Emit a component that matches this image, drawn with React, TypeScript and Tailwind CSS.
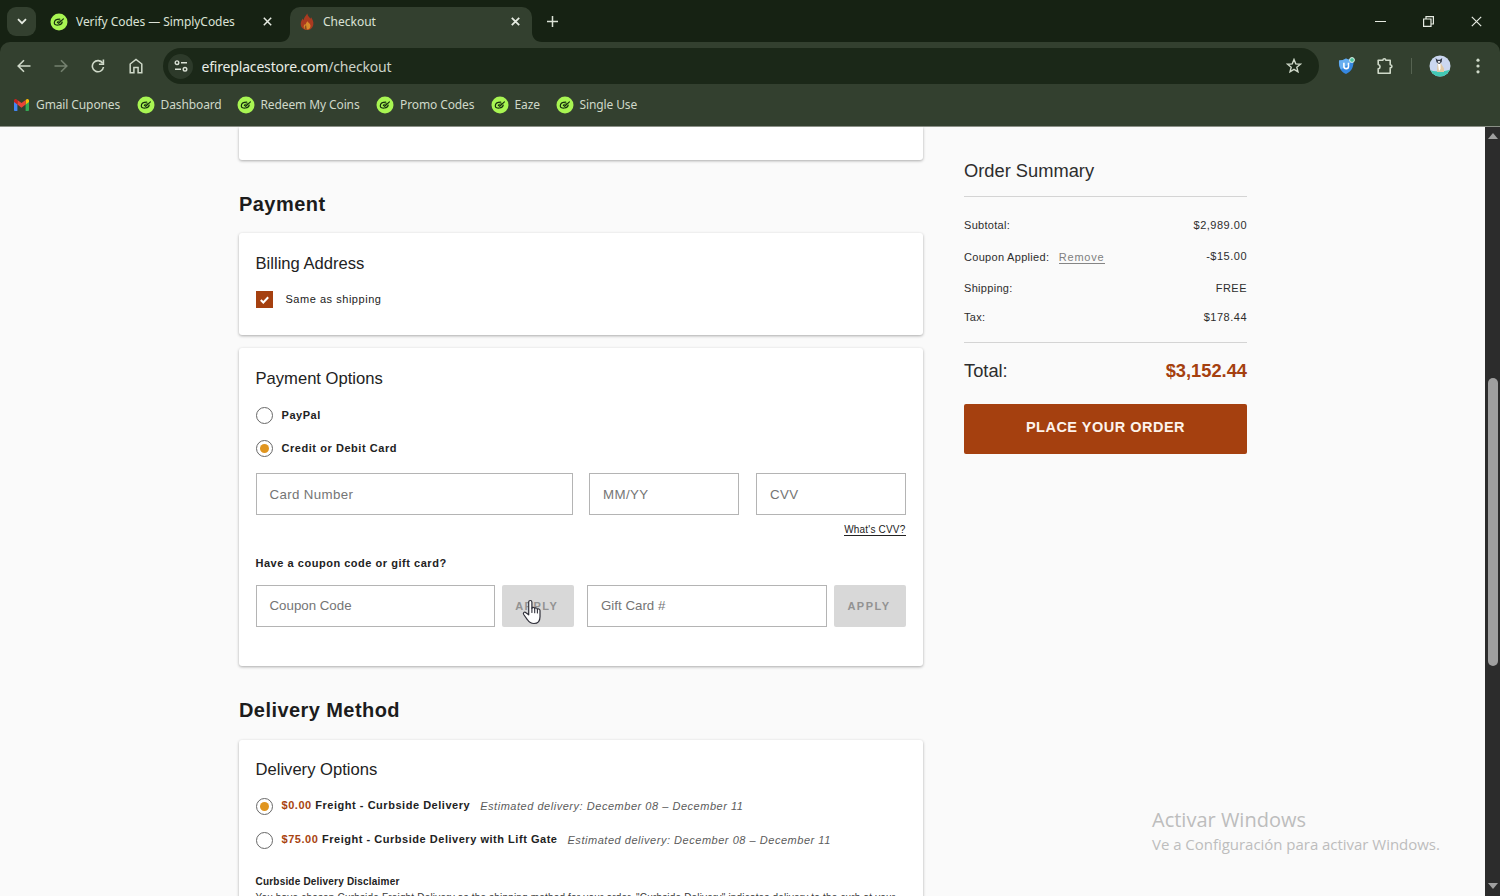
import type { ReactNode } from "react"
import clsx from "clsx"

const BOOKMARKS = [
    { label: "Dashboard", className: "w-[100px]" },
    { label: "Redeem My Coins", className: "w-[139.500px]" },
    { label: "Promo Codes", className: "w-[114.500px]" },
    { label: "Eaze", className: "w-[65px]" },
    { label: "Single Use", className: "w-[90px]" },
]

function CodesIcon() {
    return (
        <svg width="18" height="18" viewBox="0 0 18 18" className="shrink-0">
            <circle cx="9" cy="9" r="8.500" fill="#a8f552" />
            <g fill="none" stroke="#17300f" strokeWidth="1.200" strokeLinecap="round" strokeLinejoin="round">
                <path d="M9.800 6.200C6.600 6.200 4.300 7.800 4.300 9.900c0 1.900 2.100 2.500 4.200 2.100 2.200-.4 3.500-1.400 3.700-2.900" />
                <path d="M7.300 9.300l1.400 1 4.700-4.400" />
                <path d="M7.800 8.500l2.600-.8" strokeWidth="0.900" />
            </g>
        </svg>
    )
}

function FlameIcon() {
    return (
        <svg width="16" height="18" viewBox="0 0 16 18" className="shrink-0">
            <path d="M8.300.6c.4 2.600 2.100 3.500 3.100 5.200l.7-1.500c1.500 2.200 2.700 4.500 2.200 7.400-.5 3-2.800 5.400-6.200 5.400-3.700 0-6.300-2.400-6.400-6 0-2.400 1-3.900 2-5.600l.9 1.700C5 4.700 6.600 3 8.300.6z" fill="#a93a20" />
            <path d="M8.600 8.300c.2 1.300 2.600 2 2.900 4.300.2 2.300-1 4-3.300 4s-3.600-1.300-3.500-3.100c.1-1.200.8-1.900 1.400-2.500l.7.800c.1-1.400.8-2.500 1.800-3.500z" fill="#d88a2a" />
            <path d="M7 11.700l-1.300 2.200.5 2.600 1.700.3z" fill="#8a4a1f" />
        </svg>
    )
}

function GmailIcon() {
    return (
        <svg width="15" height="12" viewBox="0 0 15 12" className="shrink-0">
            <path d="M0 1.500V11c0 .5.4 1 1 1h2.400V4.500z" fill="#4285f4" />
            <path d="M11.600 4.500V12H14c.6 0 1-.5 1-1V1.500z" fill="#34a853" />
            <path d="M11.600 1v4.600L15 3V1.600C15 .2 13.400-.5 12.400.4z" fill="#fbbc04" />
            <path d="M3.400 5.600V1l4.100 3.100L11.600 1v4.600L7.500 8.700z" fill="#ea4335" />
            <path d="M0 1.600V3l3.400 2.600V1L2.600.4C1.600-.5 0 .2 0 1.600z" fill="#c5221f" />
        </svg>
    )
}

function CloseIcon({ size, width = 1.5 }: { size: number, width?: number }) {
    return (
        <svg width={size} height={size} viewBox={`0 0 ${size} ${size}`} className="shrink-0">
            <path d={`M.8.8L${size - 0.8} ${size - 0.8}M${size - 0.8}.8L.8 ${size - 0.8}`} stroke="#e6ebe2" strokeWidth={width} />
        </svg>
    )
}

function TabStrip() {
    return (
        <div className="flex h-[42px] bg-[#162213] text-xs text-[#dbe2d6]">
            <button className="mt-[7px] ml-[7px] flex size-[29px] items-center justify-center rounded-[9px] bg-[#33402f]">
                <svg width="10" height="7" viewBox="0 0 10 7">
                    <path d="M1 1.200l4 4 4-4" fill="none" stroke="#e6ebe2" strokeWidth="1.800" />
                </svg>
            </button>
            <div className="ml-[14px] flex h-[43px] w-[240px] items-center">
                <CodesIcon />
                <span className="ml-2 w-[178px] whitespace-nowrap tracking-[-0.06px]">Verify Codes — SimplyCodes</span>
                <span className="ml-[9px]"><CloseIcon size={9} /></span>
            </div>
            <div className="relative mt-[7px] flex h-[35px] w-[242px] items-center rounded-t-[10px] bg-[#33402f]">
                <svg width="10" height="10" viewBox="0 0 10 10" className="absolute bottom-0 -left-[10px]">
                    <path d="M10 0v10H0C6 10 10 6 10 0z" fill="#33402f" />
                </svg>
                <svg width="10" height="10" viewBox="0 0 10 10" className="absolute -right-[10px] bottom-0">
                    <path d="M0 0v10h10C4 10 0 6 0 0z" fill="#33402f" />
                </svg>
                <span className="mb-[5px] ml-[9px]"><FlameIcon /></span>
                <span className="mb-[5px] ml-2 w-[188px]">Checkout</span>
                <span className="mb-[6px]"><CloseIcon size={9} width={1.800} /></span>
            </div>
            <svg width="11" height="11" viewBox="0 0 11 11" className="mt-4 ml-[15px]">
                <path d="M5.500 0v11M0 5.500h11" stroke="#dbe2d6" strokeWidth="1.500" />
            </svg>
            <div className="mt-[15px] mr-[18px] ml-auto flex h-[13px] items-center">
                <svg width="11" height="11" viewBox="0 0 11 11">
                    <path d="M0 5.500h11" stroke="#e6ebe2" />
                </svg>
                <svg width="11" height="11" viewBox="0 0 11 11" className="ml-[37px]">
                    <path d="M.6 3h7.400v7.400H.6zM3 2.800V.6h7.400V8H8.200" fill="none" stroke="#e6ebe2" strokeWidth="1.200" />
                </svg>
                <span className="ml-[37px]"><CloseIcon size={11} width={1.200} /></span>
            </div>
        </div>
    )
}

function Toolbar() {
    return (
        <div className="flex h-12 items-center rounded-t-[10px] bg-[#33402f]">
            <svg width="14" height="14" viewBox="0 0 14 14" className="ml-[17px]">
                <path d="M13.500 7H1.300M7 1.200L1.200 7 7 12.800" fill="none" stroke="#cfd9c9" strokeWidth="1.600" />
            </svg>
            <svg width="14" height="14" viewBox="0 0 14 14" className="ml-[23px]">
                <path d="M.5 7h12.200M7 1.200L12.800 7 7 12.800" fill="none" stroke="#74806f" strokeWidth="1.600" />
            </svg>
            <svg width="14" height="14" viewBox="0 0 14 14" className="ml-[23px]">
                <path d="M11.700 4.200A5.600 5.600 0 1 0 12.500 8" fill="none" stroke="#cfd9c9" strokeWidth="1.600" />
                <path d="M12.400.6v4.600H7.900" fill="none" stroke="#cfd9c9" strokeWidth="1.600" />
            </svg>
            <svg width="14" height="16" viewBox="0 0 14 16" className="ml-6">
                <path d="M1.200 6L7 1.500 12.800 6v8.700H9.100V9.500H4.900v5.200H1.200z" fill="none" stroke="#cfd9c9" strokeWidth="1.500" />
            </svg>
            <div className="ml-5 flex h-9 w-[1156px] items-center rounded-full bg-[#1b2818]">
                <div className="ml-[5px] flex size-[25px] items-center justify-center rounded-full bg-[#2d3a2a]">
                    <svg width="14" height="12" viewBox="0 0 14 12" fill="none" stroke="#dbe2d6" strokeWidth="1.400">
                        <circle cx="3" cy="2.700" r="1.800" />
                        <path d="M7 2.700h6M1 9.300h6" />
                        <circle cx="11" cy="9.300" r="1.800" />
                    </svg>
                </div>
                <span className="ml-[8.500px] text-[14px] tracking-[-0.180px] text-[#e9eee6]">
                    efireplacestore.com<span className="text-[#cbd2c7]">/checkout</span>
                </span>
                <svg width="16" height="16" viewBox="0 0 16 16" className="mr-[17px] ml-auto">
                    <path d="M8 1.500l1.750 4.350 4.650.35-3.600 3 1.150 4.600L8 11.300l-3.950 2.500L5.200 9.200l-3.600-3 4.650-.35z" fill="none" stroke="#cfd9c9" strokeWidth="1.400" />
                </svg>
            </div>
            <svg width="18" height="18" viewBox="0 0 18 18" className="ml-[19px]">
                <path d="M8 1.500C10 2.600 12.500 3 15.500 3c.4 6-1.300 11.300-7.500 14C2.200 14.700.5 9.500 1 3.500 4 3.500 6 2.600 8 1.500z" fill="#3587e0" />
                <path d="M8 1.500C6 2.600 4 3.500 1 3.500.8 7 1.500 10 3 12.500L15.400 4V3C12.500 3 10 2.600 8 1.500z" fill="#67aef0" />
                <path d="M5.900 5.800v3.600c0 2.900 4.600 2.900 4.600 0V5.800" fill="none" stroke="#fff" strokeWidth="1.600" />
                <circle cx="14" cy="3" r="2.400" fill="#4cc29b" stroke="#e3f5ee" />
            </svg>
            <svg width="18" height="18" viewBox="0 0 18 18" className="ml-5">
                <path d="M2.200 3.200h4.700c.1-2 2.800-2 2.900 0h4.400v4.600c2.300.2 2.300 2.900 0 3.100v5.300h-12v-4.300c2.500-.5 2.500-3.900 0-4.400z" fill="none" stroke="#cfd9c9" strokeWidth="1.600" strokeLinejoin="round" />
            </svg>
            <div className="ml-[17px] h-4 w-px bg-[#566351]" />
            <svg width="22" height="22" viewBox="0 0 22 22" className="ml-[17px]">
                <defs>
                    <clipPath id="avatar"><circle cx="11" cy="11" r="10.500" /></clipPath>
                </defs>
                <g clipPath="url(#avatar)">
                    <path d="M0 0h22v22H0z" fill="#cbd7f0" />
                    <path d="M0 14.500c4 2.500 14 2.500 22 0V22H0z" fill="#42c9b5" />
                    <path d="M8.500 8.500h3.500l3 5v3.500H8z" fill="#e0c9a5" />
                    <path d="M9 9h2.500v5l-1.500 2z" fill="#fff" />
                    <path d="M6.500 3l2 1.800h2.500L13.200 3l-.5 4-2.500 2L7.500 7.200z" fill="#353b49" />
                    <path d="M8.900 6h2.200v1.800H8.900z" fill="#e9e9ea" />
                </g>
            </svg>
            <svg width="4" height="16" viewBox="0 0 4 16" fill="#cfd9c9" className="ml-[25px]">
                <circle cx="2" cy="2.200" r="1.600" />
                <circle cx="2" cy="8" r="1.600" />
                <circle cx="2" cy="13.800" r="1.600" />
            </svg>
        </div>
    )
}

function BookmarksBar() {
    return (
        <div className="flex h-[37px] items-center border-b border-[#8b9087] bg-[#33402f] pb-[7px] pl-[14px] text-xs tracking-[-0.110px] whitespace-nowrap text-[#cfd8c9]">
            <div className="flex w-[122.500px] items-center">
                <GmailIcon />
                <span className="ml-[7px]">Gmail Cupones</span>
            </div>
            {BOOKMARKS.map(bookmark => (
                <div key={bookmark.label} className={clsx("flex shrink-0 items-center", bookmark.className)}>
                    <CodesIcon />
                    <span className="ml-[6px]">{bookmark.label}</span>
                </div>
            ))}
        </div>
    )
}

function Card({ className, children }: { className?: string, children?: ReactNode }) {
    return (
        <div className={clsx("rounded-[3px] bg-white pl-[16.500px] pr-4 shadow-[0_1px_3px_rgba(0,0,0,0.32)]", className)}>
            {children}
        </div>
    )
}

function Radio({ checked }: { checked?: boolean }) {
    return (
        <span className="flex size-[17px] shrink-0 items-center justify-center rounded-full border border-[#686868] bg-white">
            {checked && <span className="size-[9px] rounded-full bg-[#e0951f]" />}
        </span>
    )
}

function Field({ label, className }: { label: string, className: string }) {
    return (
        <div className={clsx("flex h-[42px] items-center border border-[#b4b4b4] pl-[13px] text-[13.300px] text-[#757575]", className)}>
            {label}
        </div>
    )
}

function ApplyButton({ className }: { className?: string }) {
    return (
        <button className={clsx("h-[42px] rounded-[2px] bg-[#d8d8d8] pr-[2px] text-[11px] font-bold tracking-[1.500px] text-[#929292]", className)}>
            APPLY
        </button>
    )
}

function DeliveryOption({ price, name, checked }: { price: string, name: string, checked?: boolean }) {
    return (
        <div className="flex h-[17px] items-center text-[11px] tracking-[0.530px] whitespace-nowrap">
            <Radio checked={checked} />
            <b className="-mt-[2px] ml-[9px]"><span className="text-[#a8430f]">{price}</span> {name}</b>
            <i className="ml-[10px] text-[#5b5b5b]">Estimated delivery: December 08 – December 11</i>
        </div>
    )
}

function SummaryRow({ label, value, className, valueClassName, children }: { label: string, value: string, className?: string, valueClassName?: string, children?: ReactNode }) {
    return (
        <div className={clsx("flex h-4 items-center text-[11px] tracking-[0.300px]", className)}>
            <span>{label}</span>
            {children}
            <span className={clsx("ml-auto tracking-[0.500px]", valueClassName)}>{value}</span>
        </div>
    )
}

function OrderSummary() {
    return (
        <aside className="ml-[41px] w-[283px] pt-[33px] text-[#2d2d2d]">
            <h2 className="text-[18.300px] leading-[22px]">Order Summary</h2>
            <div className="mt-[14px] border-t border-[#d4d4d4]" />
            <SummaryRow label="Subtotal:" value="$2,989.00" className="mt-[20px]" />
            <SummaryRow label="Coupon Applied:" value="-$15.00" className="mt-[16px]" valueClassName="-mt-[2px]">
                <a className="ml-[9.500px] border-b border-[#858585] text-[11px] leading-[12px] tracking-[0.800px] text-[#808080]">Remove</a>
            </SummaryRow>
            <SummaryRow label="Shipping:" value="FREE" className="mt-[15px]" />
            <SummaryRow label="Tax:" value="$178.44" className="mt-[13px]" />
            <div className="mt-[17px] border-t border-[#d4d4d4]" />
            <div className="mt-[17px] flex items-center justify-between text-[18.300px] leading-[22px]">
                <span>Total:</span>
                <b className="text-[#a5400f]">$3,152.44</b>
            </div>
            <button className="mt-[22px] h-[50px] w-full rounded-[2px] bg-[#a5400f] pb-[3px] text-[14.500px] font-bold tracking-[0.500px] text-[#fdf3ec]">
                PLACE YOUR ORDER
            </button>
        </aside>
    )
}

function Checkout() {
    return (
        <div className="w-[684px] text-[#222]">
            <Card className="h-[33px] rounded-t-none" />
            <h1 className="mt-8 text-[20px] leading-6 font-bold tracking-[0.450px] text-[#1c1c1c]">Payment</h1>
            <Card className="mt-[17px] h-[102px] pt-[21px]">
                <h2 className="text-[16.600px] leading-5">Billing Address</h2>
                <div className="mt-[17px] flex items-center">
                    <span className="flex size-[17px] items-center justify-center bg-[#a5400f]">
                        <svg width="9" height="8" viewBox="0 0 9 8">
                            <path d="M.8 4l2.500 2.500L8.200 1.200" fill="none" stroke="#fff" strokeWidth="2" />
                        </svg>
                    </span>
                    <span className="ml-[13px] text-[11px] tracking-[0.530px]">Same as shipping</span>
                </div>
            </Card>
            <Card className="mt-[13px] h-[318px] pt-[21px]">
                <h2 className="text-[16.600px] leading-5">Payment Options</h2>
                <div className="mt-[18px] flex h-[17px] items-center text-[11px] font-bold tracking-[0.550px]">
                    <Radio />
                    <span className="ml-[9px]">PayPal</span>
                </div>
                <div className="mt-4 flex h-[17px] items-center text-[11px] font-bold tracking-[0.550px]">
                    <Radio checked />
                    <span className="ml-[9px]">Credit or Debit Card</span>
                </div>
                <div className="mt-4 flex">
                    <Field label="Card Number" className="w-[317px] pt-px tracking-[0.350px]" />
                    <Field label="MM/YY" className="ml-[16.500px] w-[150px] pt-px tracking-[0.400px]" />
                    <Field label="CVV" className="ml-[17px] w-[150px] pt-px tracking-[0.400px]" />
                </div>
                <div className="mt-[9px] flex h-3 justify-end pr-[1.500px]">
                    <a className="border-b border-[#222] text-[10px] leading-[11px] tracking-[0.200px]">What's CVV?</a>
                </div>
                <p className="mt-[20px] text-[11px] leading-[14px] font-bold tracking-[0.530px]">Have a coupon code or gift card?</p>
                <div className="mt-[15px] flex">
                    <Field label="Coupon Code" className="w-[239.500px]" />
                    <div className="relative ml-[7px]">
                        <ApplyButton className="w-[71.500px]" />
                        <svg width="20" height="26" viewBox="0 0 20 26" className="absolute top-[14px] left-[20px]">
                            <path d="M6.700 15.800V3.200c0-2.300 3.200-2.300 3.200 0v6c.4-1.300 2.600-1.200 2.800.4.500-1 2.500-.8 2.700.7.700-.8 2.500-.5 2.600 1.200v6.200c0 4.500-2.600 6.800-6 6.800-3.200 0-5-1.300-6.500-3.700L1.700 15.500c-1-1.800.8-3.200 2.300-1.800z" fill="#fff" stroke="#30303a" strokeWidth="1.200" strokeLinejoin="round" />
                            <path d="M9.900 9v4.500M12.700 9.800v3.900M15.400 10.600V14" stroke="#30303a" strokeWidth="1.100" strokeLinecap="round" />
                        </svg>
                    </div>
                    <Field label="Gift Card #" className="ml-[13.500px] w-[240px]" />
                    <ApplyButton className="ml-[7px] w-[72px]" />
                </div>
            </Card>
            <h1 className="mt-8 text-[20px] leading-6 font-bold tracking-[0.430px] text-[#1c1c1c]">Delivery Method</h1>
            <Card className="mt-[18px] h-[200px] pt-[20px]">
                <h2 className="text-[16.600px] leading-5">Delivery Options</h2>
                <div className="mt-[18px] flex flex-col gap-[17px]">
                    <DeliveryOption price="$0.00" name="Freight - Curbside Delivery" checked />
                    <DeliveryOption price="$75.00" name="Freight - Curbside Delivery with Lift Gate" />
                </div>
                <p className="mt-[26px] text-[10px] leading-[14px] font-bold tracking-[0.200px]">Curbside Delivery Disclaimer</p>
                <p className="mt-[2px] text-[10px] leading-[14px] tracking-[0.180px] whitespace-nowrap text-[#3a3a3a]">
                    You have chosen Curbside Freight Delivery as the shipping method for your order. "Curbside Delivery" indicates delivery to the curb at your
                </p>
            </Card>
        </div>
    )
}

function Scrollbar() {
    return (
        <div className="ml-auto flex w-[15px] flex-col items-center bg-[#2c2c2c]">
            <svg width="10" height="6" viewBox="0 0 10 6" className="mt-[6px] shrink-0">
                <path d="M0 6l5-6 5 6z" fill="#a0a0a0" />
            </svg>
            <div className="mt-[239px] h-[288px] w-[10px] shrink-0 rounded-full bg-[#9f9f9f]" />
            <svg width="10" height="6" viewBox="0 0 10 6" className="mt-auto mb-[7px] shrink-0">
                <path d="M0 0l5 6 5-6z" fill="#a0a0a0" />
            </svg>
        </div>
    )
}

export default function App() {
    return (
        <main className="relative flex h-[896px] w-[1500px] flex-col overflow-hidden bg-[#162213]">
            <header className="shrink-0 font-['Noto_Sans',sans-serif]">
                <TabStrip />
                <Toolbar />
                <BookmarksBar />
            </header>
            <div className="flex h-[769px] overflow-hidden bg-[#fafafa] pl-[239px] font-['Liberation_Sans',Arial,sans-serif]">
                <Checkout />
                <OrderSummary />
                <Scrollbar />
            </div>
            <div className="absolute top-[807px] left-[1152px] font-['Open_Sans',sans-serif] whitespace-nowrap text-[#bdbdbd]">
                <p className="text-[20px] leading-[26px]">Activar Windows</p>
                <p className="text-[15px] leading-[22px] tracking-[-0.030px]">Ve a Configuración para activar Windows.</p>
            </div>
        </main>
    )
}
